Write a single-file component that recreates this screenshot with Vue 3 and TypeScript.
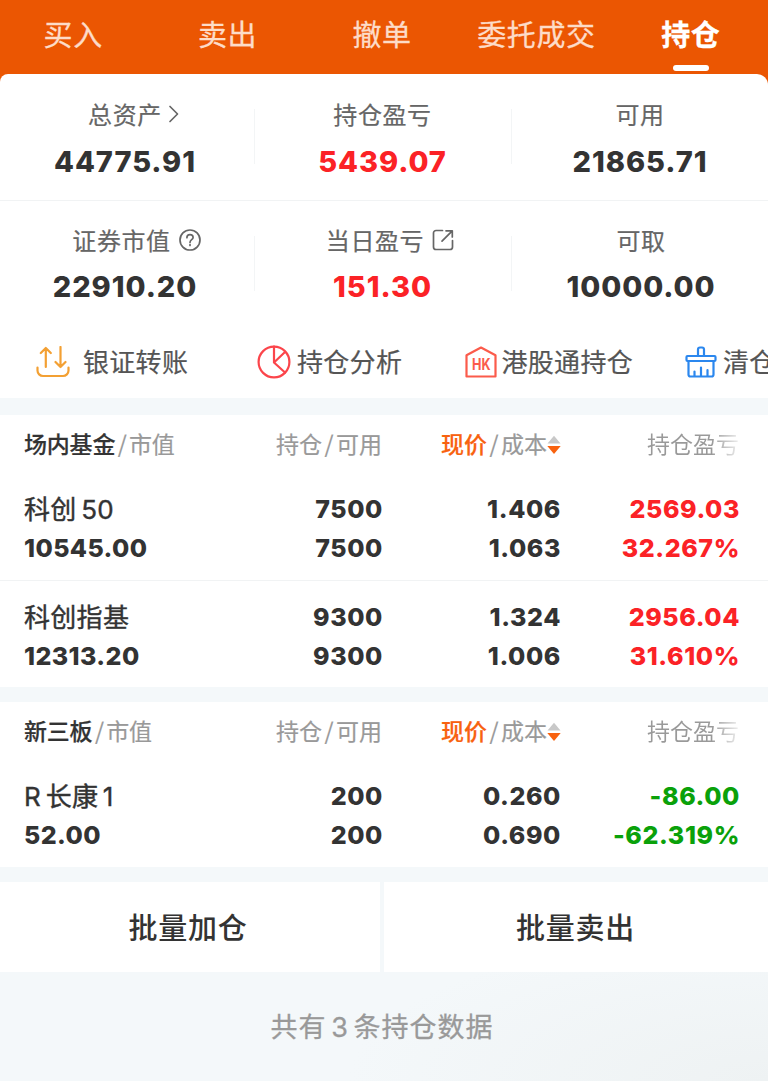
<script setup lang="ts">
interface Stat {
  label: string
  value: string
  tone?: 'up'
  icon?: 'chevron' | 'help' | 'share'
}

interface Holding {
  name: string
  market: string
  held: string
  available: string
  price: string
  cost: string
  profit: string
  rate: string
  tone: 'up' | 'down'
}

interface Group {
  title: string
  rows: Holding[]
}

const tabs: string[] = ['买入', '卖出', '撤单', '委托成交', '持仓']
const activeTab = '持仓'

const statRows: Stat[][] = [
  [
    { label: '总资产', value: '44775.91', icon: 'chevron' },
    { label: '持仓盈亏', value: '5439.07', tone: 'up' },
    { label: '可用', value: '21865.71' },
  ],
  [
    { label: '证券市值', value: '22910.20', icon: 'help' },
    { label: '当日盈亏', value: '151.30', tone: 'up', icon: 'share' },
    { label: '可取', value: '10000.00' },
  ],
]

const groups: Group[] = [
  {
    title: '场内基金',
    rows: [
      { name: '科创 50', market: '10545.00', held: '7500', available: '7500', price: '1.406', cost: '1.063', profit: '2569.03', rate: '32.267%', tone: 'up' },
      { name: '科创指基', market: '12313.20', held: '9300', available: '9300', price: '1.324', cost: '1.006', profit: '2956.04', rate: '31.610%', tone: 'up' },
    ],
  },
  {
    title: '新三板',
    rows: [
      { name: 'R 长康 1', market: '52.00', held: '200', available: '200', price: '0.260', cost: '0.690', profit: '-86.00', rate: '-62.319%', tone: 'down' },
    ],
  },
]
</script>

<template>
  <main class="page">
    <nav class="tabs">
      <div v-for="tab in tabs" :key="tab" class="tab" :class="{ active: tab === activeTab }">
        <span>{{ tab }}</span>
      </div>
    </nav>

    <div class="sheet-wrap">
      <section class="sheet">
        <div v-for="(row, i) in statRows" :key="i" class="stats" :class="'stats-' + i">
          <div v-for="stat in row" :key="stat.label" class="stat">
            <div class="stat-label" :class="stat.icon ? 'with-' + stat.icon : ''">
              <span>{{ stat.label }}</span>
              <svg v-if="stat.icon === 'chevron'" class="i-chevron" width="12" height="18" viewBox="0 0 12 18">
                <path d="M2 1.5 9.5 9 2 16.5" />
              </svg>
              <svg v-else-if="stat.icon === 'help'" class="i-help" width="22" height="22" viewBox="0 0 22 22">
                <circle cx="11" cy="11" r="10" />
                <path d="M7.9 8.7c0-1.9 1.3-3.1 3.1-3.1s3.1 1.2 3.1 2.8c0 2.2-3.1 2.5-3.1 5" />
                <path d="M11 15.6v.8" />
              </svg>
              <svg v-else-if="stat.icon === 'share'" class="i-share" width="22" height="22" viewBox="0 0 22 22">
                <path d="M10.5 1.5H4A2.5 2.5 0 0 0 1.5 4v14A2.5 2.5 0 0 0 4 20.5h14a2.5 2.5 0 0 0 2.5-2.5v-6.5" />
                <path d="M14 1.8h6.300V8M20 2.200 10 12.200" />
              </svg>
            </div>
            <div class="stat-value" :class="stat.tone">{{ stat.value }}</div>
          </div>
        </div>

        <div class="actions">
          <div class="action transfer">
            <svg width="34" height="32" viewBox="0 0 34 32" stroke="#f3a033">
              <path d="M1.500 21.500v3a5.500 5.500 0 0 0 5.500 5.500h20a5.500 5.500 0 0 0 5.500-5.500v-3" />
              <path d="M9.800 21V2M4.800 7l5-5 5 5M24.500 1v20M19.500 16l5 5 5-5" />
            </svg>
            <span>银证转账</span>
          </div>
          <div class="action analysis">
            <svg width="34" height="34" viewBox="0 0 34 34" stroke="#fb454b">
              <circle cx="17" cy="17" r="15.400" />
              <path d="M17 1.600V17.500L28 27.500M17 17.500 28 7" />
            </svg>
            <span>持仓分析</span>
          </div>
          <div class="action connect">
            <svg width="32" height="32" viewBox="0 0 32 32" stroke="#fb5b4b">
              <path d="M1.500 9.300 16 1.500l14.500 7.800v21.200h-29z" />
              <text x="7" y="23.500" textLength="18.500" lengthAdjust="spacingAndGlyphs">HK</text>
            </svg>
            <span>港股通持仓</span>
          </div>
          <div class="action cleared">
            <svg width="32" height="32" viewBox="0 0 32 32" stroke="#2b87ee">
              <path d="M13 10V3.500a2 2 0 0 1 2-2h2a2 2 0 0 1 2 2V10" />
              <rect x="1.500" y="10" width="29" height="5" rx="1" />
              <path d="M3.500 15v13.500a2 2 0 0 0 2 2h21a2 2 0 0 0 2-2V15M9.500 30v-4.500M16 30v-8.500M22.500 30v-6" />
            </svg>
            <span>清仓</span>
          </div>
        </div>
      </section>
    </div>

    <section v-for="group in groups" :key="group.title" class="group">
      <header class="group-head">
        <div class="head-name"><b>{{ group.title }}</b><i>/</i>市值</div>
        <div class="head-held">持仓<i>/</i>可用</div>
        <div class="head-price">
          <div><em>现价</em><i>/</i>成本</div>
          <svg width="14" height="20" viewBox="0 0 14 20">
            <path d="M7 .8 13.500 8.500H.5z" fill="#c8c8c8" />
            <path d="M.3 11h13.400L7 19z" fill="#f8620f" />
          </svg>
        </div>
        <div class="head-profit"><span>持仓盈亏</span></div>
      </header>
      <div v-for="row in group.rows" :key="row.name" class="holding">
        <div class="cell name"><span class="title">{{ row.name }}</span><span>{{ row.market }}</span></div>
        <div class="cell"><span>{{ row.held }}</span><span>{{ row.available }}</span></div>
        <div class="cell price"><span>{{ row.price }}</span><span>{{ row.cost }}</span></div>
        <div class="cell" :class="row.tone"><span>{{ row.profit }}</span><span>{{ row.rate }}</span></div>
      </div>
    </section>

    <div class="batch">
      <div class="batch-item">批量加仓</div>
      <div class="batch-item">批量卖出</div>
    </div>

    <footer class="summary">共有 3 条持仓数据</footer>
  </main>
</template>

<style>
body {
  background: #fff;
}
</style>

<style scoped>
.page {
  width: 768px;
  height: 1081px;
  overflow: hidden;
  background: radial-gradient(ellipse 420px 150px at 100% 100%, #eef2f3, rgba(244, 247, 249, 0)) #f4f8fa;
  color: #333;
  font-family: Inter, "Noto Sans CJK SC", sans-serif;
  white-space: nowrap;
}

.page svg {
  flex: none;
  fill: none;
  stroke-linecap: round;
  stroke-linejoin: round;
}

.tabs {
  display: grid;
  grid-template-columns: repeat(5, 1fr);
  height: 74px;
  margin-left: -4px;
  background: #eb5602;
}

.tab {
  display: flex;
  flex-direction: column;
  align-items: center;
  color: #fddcc8;
  font-size: 29px;
  letter-spacing: 0.6px;
  line-height: 72px;
  -webkit-text-stroke: 0.3px;
}

.tab.active {
  color: #fff;
  font-weight: 700;
}

.tab.active::after {
  width: 36px;
  height: 6px;
  margin-top: -7px;
  border-radius: 3px;
  background: #fff;
  content: "";
}

.sheet-wrap {
  background: #eb5602;
}

.sheet {
  height: 324px;
  border-radius: 8px 11px 0 0;
  background: #fff;
}

.stats {
  display: grid;
  grid-template-columns: 250px 265px 250px;
  height: 125px;
  box-sizing: border-box;
  background:
    linear-gradient(#f3f5f6, #f3f5f6) 254px 35px / 1px 55px no-repeat,
    linear-gradient(#f3f5f6, #f3f5f6) 511px 35px / 1px 55px no-repeat;
}

.stats-0 {
  height: 127px;
  border-bottom: 1px solid #f1f3f4;
}

.stat-label {
  display: flex;
  align-items: center;
  justify-content: center;
  height: 30px;
  margin-top: 23px;
  color: #666;
  font-size: 24px;
  letter-spacing: 0.6px;
  -webkit-text-stroke: 0.2px;
}

.stats-0 .stat-label {
  margin-top: 24px;
}

.stats-1 .stat:last-child {
  padding-left: 2px;
}

.stat-label svg {
  margin-top: 2px;
  stroke: #666;
  stroke-width: 1.7;
}

.with-chevron {
  padding-left: 18px;
}

.with-help {
  padding-left: 23px;
}

.with-share {
  padding-left: 15px;
}

.i-chevron {
  margin-left: 6px;
}

.i-help,
.i-share {
  margin-left: 8px;
}

.stat-value {
  height: 32px;
  margin-top: 17px;
  font-size: 29px;
  font-weight: 800;
  letter-spacing: 0.95px;
  line-height: 32px;
  text-align: center;
}

.stats-0 .stat-value {
  margin-top: 18px;
}

.up {
  color: #fb2226;
}

.down {
  color: #0aa10a;
}

.actions {
  display: flex;
  height: 72px;
  padding-left: 36px;
  overflow: hidden;
}

.action {
  display: flex;
  flex: none;
  align-items: center;
  color: #555;
  font-size: 26px;
  letter-spacing: 0.3px;
  -webkit-text-stroke: 0.2px;
}

.action span {
  padding-bottom: 3px;
}

.action svg {
  stroke-width: 2.2;
}

.action text {
  fill: #fb5b4b;
  font-size: 16.5px;
  font-weight: 700;
  letter-spacing: 0;
  stroke: none;
}

.transfer { width: 221px; gap: 13px; }
.analysis { width: 207.5px; gap: 6px; }
.connect { width: 220.5px; gap: 5px; }
.cleared { gap: 6px; }

.group {
  margin-top: 15px;
  background: #fff;
}

.sheet-wrap + .group {
  margin-top: 17px;
}

.group-head,
.holding {
  display: grid;
  grid-template-columns: 202px 156px 179px 178px;
  padding-left: 24px;
}

.group-head {
  height: 58px;
  color: #999;
  font-size: 23px;
  line-height: 60px;
  -webkit-text-stroke: 0.2px;
}

.head-name {
  letter-spacing: -0.2px;
}

.group-head b {
  color: #333;
  font-weight: 500;
}

.group-head i {
  margin: 0 2.5px;
  font-family: "Noto Sans CJK SC", sans-serif;
  font-style: normal;
  line-height: 1;
}

.group-head em {
  color: #f8620f;
  font-style: normal;
  font-weight: 500;
}

.head-held {
  text-align: right;
}

.head-price {
  display: flex;
  align-items: center;
  justify-content: flex-end;
  height: 60px;
}

.head-profit {
  text-align: right;
}

.head-profit span {
  background: linear-gradient(90deg, #999 70%, #eee 100%);
  background-clip: text;
  color: transparent;
  -webkit-text-stroke: 0;
}

.holding {
  height: 107px;
  box-sizing: border-box;
  padding-top: 17px;
}

.holding + .holding {
  border-top: 1px solid #f1f3f4;
}

.cell {
  display: flex;
  flex-direction: column;
  align-items: flex-end;
  margin-right: -1px;
  font-size: 25px;
  font-weight: 800;
  letter-spacing: 0.6px;
  line-height: 39px;
}

.cell.price {
  margin-right: 0;
}

.cell span {
  height: 39px;
}

.name {
  align-items: flex-start;
  letter-spacing: 0.4px;
}

.cell .title {
  font-size: 26px;
  font-weight: 400;
  letter-spacing: 0.3px;
  word-spacing: -3px;
  -webkit-text-stroke: 0.4px;
}

.batch {
  display: grid;
  grid-template-columns: 380px 384px;
  gap: 4px;
  height: 90px;
  margin-top: 15px;
}

.batch-item {
  height: 90px;
  box-sizing: border-box;
  padding: 3px 4px 0 0;
  background: #fff;
  font-size: 29px;
  font-weight: 500;
  letter-spacing: 0.7px;
  line-height: 87px;
  text-align: center;
}

.batch-item + .batch-item {
  padding-right: 1px;
}

.summary {
  padding-right: 4px;
  color: #999;
  font-size: 27px;
  letter-spacing: 1px;
  line-height: 112px;
  text-align: center;
  word-spacing: -4px;
  -webkit-text-stroke: 0.3px;
}
</style>
